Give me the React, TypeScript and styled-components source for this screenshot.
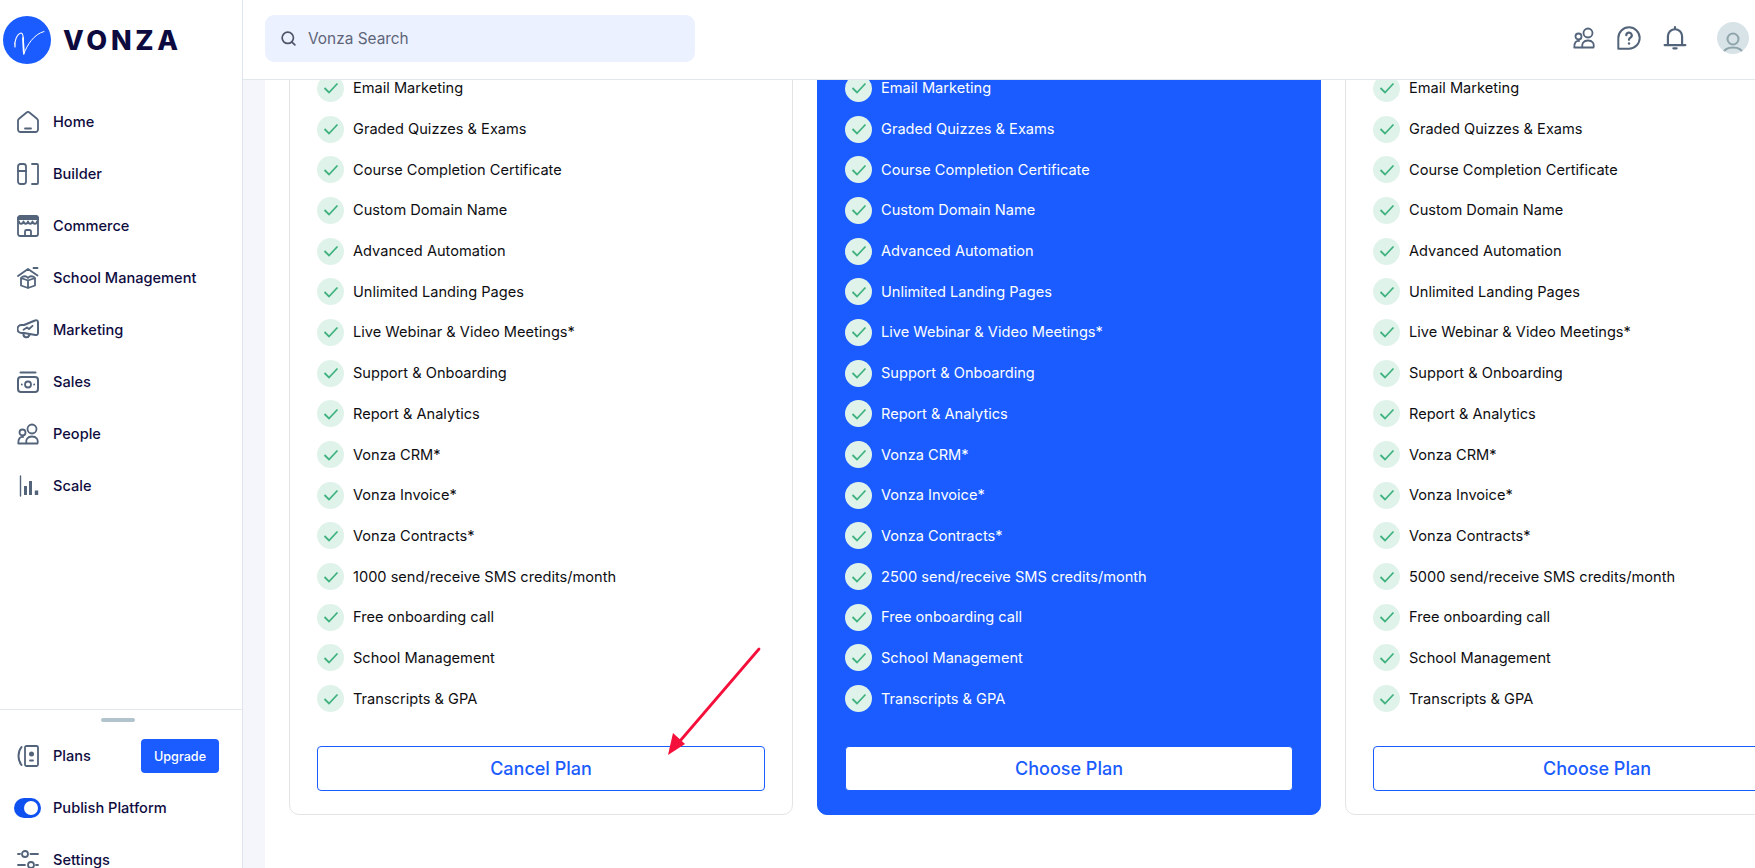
import React from 'react'
import styled, { createGlobalStyle } from 'styled-components'
import { Search } from 'lucide-react'

const GlobalStyle = createGlobalStyle`
  html, body {
    margin: 0;
    height: 100%;
    overflow: hidden;
    background: #fff;
    font-family: Inter, "Liberation Sans", sans-serif;
  }
  * {
    box-sizing: border-box;
  }
`

const Page = styled.div`
  position: relative;
  display: flex;
  width: 1755px;
  height: 868px;
  overflow: hidden;
`

const Sidebar = styled.aside`
  flex: 0 0 243px;
  display: flex;
  flex-direction: column;
  height: 100%;
  overflow: hidden;
  background: #fff;
  border-right: 1px solid #dfe5ee;
`

const Brand = styled.div`
  display: flex;
  align-items: center;
  gap: 12px;
  height: 80px;
  padding-left: 3px;
`

const BrandName = styled.span`
  font-family: Inter, sans-serif;
  font-size: 27px;
  font-weight: 800;
  letter-spacing: 3.7px;
  color: #0c0a3e;
`

const Nav = styled.nav`
  flex: 1;
  display: flex;
  flex-direction: column;
  padding-top: 16px;
`

const NavRow = styled.div`
  display: flex;
  align-items: center;
  gap: 14px;
  height: 52px;
  padding-left: 17px;
  font-size: 14.6px;
  font-weight: 500;
  color: #0f0c3f;
  flex-shrink: 0;
`

const SideFooter = styled.div`
  position: relative;
  height: 159px;
  flex-shrink: 0;
  padding-top: 20px;
  border-top: 1px solid #e4e9ee;
`

const Handle = styled.span`
  position: absolute;
  top: 8px;
  left: 101px;
  width: 34px;
  height: 4px;
  border-radius: 2px;
  background: #b2c4cb;
`

const PlansRow = styled(NavRow)`
  justify-content: space-between;
  padding-right: 23px;
`

const RowLabel = styled.span`
  display: flex;
  align-items: center;
  gap: 14px;
`

const UpgradeButton = styled.button`
  width: 78px;
  height: 34px;
  border: none;
  border-radius: 4px;
  background: #1a5cff;
  color: #fff;
  font: 500 12.6px Inter, sans-serif;
`

const ToggleRow = styled(NavRow)`
  padding-left: 14px;
  gap: 12px;
`

const Toggle = styled.span`
  display: flex;
  align-items: center;
  justify-content: flex-end;
  width: 27px;
  height: 20px;
  padding-right: 3px;
  border-radius: 10px;
  background: #0f51f0;
`

const ToggleKnob = styled.span`
  width: 14px;
  height: 14px;
  border-radius: 50%;
  background: #fff;
`

const Content = styled.div`
  flex: 1;
  display: flex;
  flex-direction: column;
  min-width: 0;
  background: #f4f6fb;
`

const Header = styled.header`
  flex: 0 0 80px;
  display: flex;
  align-items: center;
  justify-content: space-between;
  padding: 0 6px 3px 22px;
  background: #fff;
  border-bottom: 1px solid #e1e8ec;
`

const SearchBox = styled.div`
  display: flex;
  align-items: center;
  gap: 11px;
  width: 430px;
  height: 47px;
  padding-left: 15px;
  border-radius: 9px;
  background: #ebf1fe;
  font-size: 15.4px;
  color: #5f6579;
`

const HeaderIcons = styled.div`
  display: flex;
  align-items: center;
`

const HeaderIcon = styled.span`
  display: flex;
  margin-right: 22px;
`

const Avatar = styled.span`
  display: flex;
  align-items: flex-end;
  justify-content: center;
  width: 32px;
  height: 32px;
  margin-left: 8px;
  border-radius: 50%;
  overflow: hidden;
  background: #d8e3e8;
`

const Main = styled.main`
  flex: 1;
  display: flex;
  flex-direction: column;
  justify-content: flex-end;
  min-height: 0;
  margin-left: 22px;
  padding: 0 0 53px 24px;
  overflow: hidden;
  background: #fff;
`

const CardGrid = styled.div`
  display: grid;
  grid-template-columns: repeat(3, 504px);
  column-gap: 24px;
  flex-shrink: 0;
`

const Card = styled.section<{ $featured?: boolean }>`
  display: flex;
  flex-direction: column;
  padding: 0 27px 23px;
  border-radius: 10px;
  border: 1px solid ${({ $featured }) => ($featured ? '#1a5cff' : '#e4e4e6')};
  background: ${({ $featured }) => ($featured ? '#1a5cff' : '#fff')};
  color: ${({ $featured }) => ($featured ? '#fff' : '#0e0e12')};
`

const FeatureList = styled.ul`
  list-style: none;
  margin: 0 0 27px;
  padding: 0;
`

const FeatureRow = styled.li`
  display: flex;
  align-items: center;
  gap: 9px;
  height: 40.7px;
  font-size: 14.6px;
`

const CheckDot = styled.span`
  display: flex;
  align-items: center;
  justify-content: center;
  width: 27px;
  height: 27px;
  border-radius: 50%;
  background: #e0f3ea;
`

const PlanButton = styled.button`
  height: 45px;
  border-radius: 4px;
  border: 1px solid #1a5cff;
  background: #fff;
  color: #1a5cff;
  font: 500 18px Inter, sans-serif;
`

const ArrowMark = styled.svg`
  position: absolute;
  left: 660px;
  top: 640px;
`

const iconProps = {
  width: 22,
  height: 22,
  viewBox: '0 0 22 22',
  fill: 'none',
  stroke: '#52637a',
  strokeWidth: 1.8,
  strokeLinecap: 'round' as const,
  strokeLinejoin: 'round' as const,
}

const HomeIcon = () => (
  <svg {...iconProps}>
    <path d="M1 10c0-1 .4-1.700 1-2.200L9.600 1.500a2.200 2.200 0 0 1 2.800 0L20 7.800c.6.500 1 1.200 1 2.200v8.500a2.500 2.500 0 0 1-2.500 2.500h-15A2.500 2.500 0 0 1 1 18.500z" />
    <path d="M8 17.500h6" />
  </svg>
)

const BuilderIcon = () => (
  <svg {...iconProps}>
    <rect x="1" y="1" width="8" height="20" rx="2.500" />
    <path d="M1 8h8M15 1h5a1 1 0 0 1 1 1v18a1 1 0 0 1-1 1h-5" />
  </svg>
)

const CommerceIcon = () => (
  <svg {...iconProps}>
    <rect x="1" y="1" width="20" height="20" rx="2" />
    <path d="M1 3.500h20" strokeWidth="3" />
    <path d="M2 6.500c0 3 4 3 4.500 0 .5 3 4 3 4.500 0 .5 3 4 3 4.500 0 .5 3 4.500 3 4.500 0" />
    <path d="M8 21v-4.500A1.500 1.500 0 0 1 9.500 15h3a1.500 1.500 0 0 1 1.500 1.500V21" />
  </svg>
)

const SchoolIcon = () => (
  <svg {...iconProps}>
    <path d="M1 9l10-7 9.500 6.500M16.500 1h4" />
    <path d="M4 11v7.500l7 2.500 7-2.500V11l-7 2.500zM11 13.500V21" />
    <path d="M5 10c2-1 4.500-1 6 1 1.500-2 4-2 6-1" />
  </svg>
)

const MarketingIcon = () => (
  <svg {...iconProps}>
    <path d="M7 6 18 1.500A2 2 0 0 1 21 3v11.200a2 2 0 0 1-2.500 1.800L7 14H4.500a4 4 0 0 1 0-8z" strokeWidth="2" />
    <path d="M6.500 10.800l3.500-2.300 2 1.500 3.500-3.200" />
    <path d="M6.500 14.500c-.5 4.500 4.500 5 6 1.500" strokeWidth="2" />
  </svg>
)

const SalesIcon = () => (
  <svg {...iconProps}>
    <path d="M3.500 1.500h15" strokeWidth="2" />
    <rect x="1" y="6" width="20" height="15" rx="3" strokeWidth="2" />
    <circle cx="11" cy="13.500" r="3" />
    <path d="M4.800 13.500h.1M17.100 13.500h.1" />
  </svg>
)

const PeopleIcon = () => (
  <svg {...iconProps}>
    <circle cx="15" cy="6" r="4.500" />
    <path d="M9.500 20.500c-1-4 1-7 5.500-7s6.500 3 5.500 7z" />
    <circle cx="5.500" cy="9.500" r="3" />
    <path d="M6 14c-3-.5-5 2-4.700 6.500H9" />
  </svg>
)

const ScaleIcon = () => (
  <svg {...iconProps}>
    <path d="M3.500 1v20" strokeWidth="1.400" />
    <path d="M8.500 11v9M13.500 6v14" strokeWidth="3" strokeLinecap="butt" />
    <path d="M19.500 15.500V20" strokeWidth="3.400" strokeLinecap="butt" />
  </svg>
)

const PlansIcon = () => (
  <svg {...iconProps}>
    <path d="M4.500 2C.500 7 .500 15 4.500 20" strokeWidth="2" />
    <rect x="8" y="1" width="13" height="20" rx="1.500" />
    <circle cx="14.500" cy="9" r="2.500" fill="#52637a" stroke="none" />
    <path d="M13 15.500h3" />
  </svg>
)

const SettingsIcon = () => (
  <svg {...iconProps}>
    <circle cx="8" cy="5" r="3" />
    <path d="M1 5h2M13.500 5H21M1 16h7" />
    <circle cx="14" cy="16" r="3" />
    <path d="M19 16h2" />
  </svg>
)

const BubbleIcon = () => (
  <svg {...iconProps} width={24} height={24}>
    <path d="M11 1.200a9.800 9.800 0 0 1 0 19.600H1.200V11A9.800 9.800 0 0 1 11 1.200z" />
    <path d="M8.500 8.500a2.500 2.500 0 1 1 3.700 2.200c-.8.500-1.200 1-1.200 2" strokeWidth="2" />
    <path d="M11 16v.1" strokeWidth="2.200" />
  </svg>
)

const BellIcon = () => (
  <svg {...iconProps} width={24} height={24}>
    <path d="M11 1v2M4.500 17V9.500a6.500 6.500 0 0 1 13 0V17M1.500 17.500h19M9.500 20.500h3" strokeWidth="2" />
  </svg>
)

const AvatarIcon = () => (
  <svg width="24" height="26" viewBox="0 0 24 26" fill="none" stroke="#8ea5ab" strokeWidth="2">
    <circle cx="12" cy="11" r="5.500" />
    <path d="M2 26c1-5 5-6.500 10-6.500S21 21 22 26" />
  </svg>
)

const VonzaMark = () => (
  <svg width="48" height="48" viewBox="0 0 48 48" fill="none" stroke="#fff" strokeLinecap="round">
    <circle cx="24" cy="24" r="24" fill="#1a5cff" stroke="none" />
    <path d="M12 31C11 25 14 18 18 17c2 0 2.300 3 2.300 7L20.800 38" strokeWidth="1.200" />
    <path d="M20.800 38C24 29 31 18 41 15.500" strokeWidth="1" />
    <path d="M20 22 20.700 36" strokeWidth="1.700" />
  </svg>
)

const Check = () => (
  <svg width="16" height="14" viewBox="0 0 16 14" fill="none" stroke="#3fb27f" strokeWidth="1.800">
    <path d="M1.500 7l4.500 4.500L14.500 2.500" />
  </svg>
)

const navItems = [
  { label: 'Home', icon: <HomeIcon /> },
  { label: 'Builder', icon: <BuilderIcon /> },
  { label: 'Commerce', icon: <CommerceIcon /> },
  { label: 'School Management', icon: <SchoolIcon /> },
  { label: 'Marketing', icon: <MarketingIcon /> },
  { label: 'Sales', icon: <SalesIcon /> },
  { label: 'People', icon: <PeopleIcon /> },
  { label: 'Scale', icon: <ScaleIcon /> },
]

const plans = [
  { sms: 1000, action: 'Cancel Plan', featured: false },
  { sms: 2500, action: 'Choose Plan', featured: true },
  { sms: 5000, action: 'Choose Plan', featured: false },
]

const featuresFor = (sms: number) => [
  'Email Marketing',
  'Graded Quizzes & Exams',
  'Course Completion Certificate',
  'Custom Domain Name',
  'Advanced Automation',
  'Unlimited Landing Pages',
  'Live Webinar & Video Meetings*',
  'Support & Onboarding',
  'Report & Analytics',
  'Vonza CRM*',
  'Vonza Invoice*',
  'Vonza Contracts*',
  `${sms} send/receive SMS credits/month`,
  'Free onboarding call',
  'School Management',
  'Transcripts & GPA',
]

export default function App() {
  return (
    <Page>
      <GlobalStyle />
      <Sidebar>
        <Brand>
          <VonzaMark />
          <BrandName>VONZA</BrandName>
        </Brand>
        <Nav>
          {navItems.map((item) => (
            <NavRow key={item.label}>
              {item.icon}
              {item.label}
            </NavRow>
          ))}
        </Nav>
        <SideFooter>
          <Handle />
          <PlansRow>
            <RowLabel>
              <PlansIcon />
              Plans
            </RowLabel>
            <UpgradeButton>Upgrade</UpgradeButton>
          </PlansRow>
          <ToggleRow>
            <Toggle>
              <ToggleKnob />
            </Toggle>
            Publish Platform
          </ToggleRow>
          <NavRow>
            <SettingsIcon />
            Settings
          </NavRow>
        </SideFooter>
      </Sidebar>
      <Content>
        <Header>
          <SearchBox>
            <Search size={17} color="#505468" strokeWidth={2.4} />
            Vonza Search
          </SearchBox>
          <HeaderIcons>
            <HeaderIcon>
              <PeopleIcon />
            </HeaderIcon>
            <HeaderIcon>
              <BubbleIcon />
            </HeaderIcon>
            <HeaderIcon>
              <BellIcon />
            </HeaderIcon>
            <Avatar>
              <AvatarIcon />
            </Avatar>
          </HeaderIcons>
        </Header>
        <Main>
          <CardGrid>
            {plans.map((plan) => (
              <Card key={plan.sms} $featured={plan.featured}>
                <FeatureList>
                  {featuresFor(plan.sms).map((feature) => (
                    <FeatureRow key={feature}>
                      <CheckDot>
                        <Check />
                      </CheckDot>
                      {feature}
                    </FeatureRow>
                  ))}
                </FeatureList>
                <PlanButton>{plan.action}</PlanButton>
              </Card>
            ))}
          </CardGrid>
        </Main>
      </Content>
      <ArrowMark width="110" height="125" viewBox="0 0 110 125" fill="none">
        <path d="M99 9 L14 108" stroke="#f5103c" strokeWidth="2.800" strokeLinecap="round" />
        <path d="M8 115 L13 93 L25 104 Z" fill="#f5103c" />
      </ArrowMark>
    </Page>
  )
}
